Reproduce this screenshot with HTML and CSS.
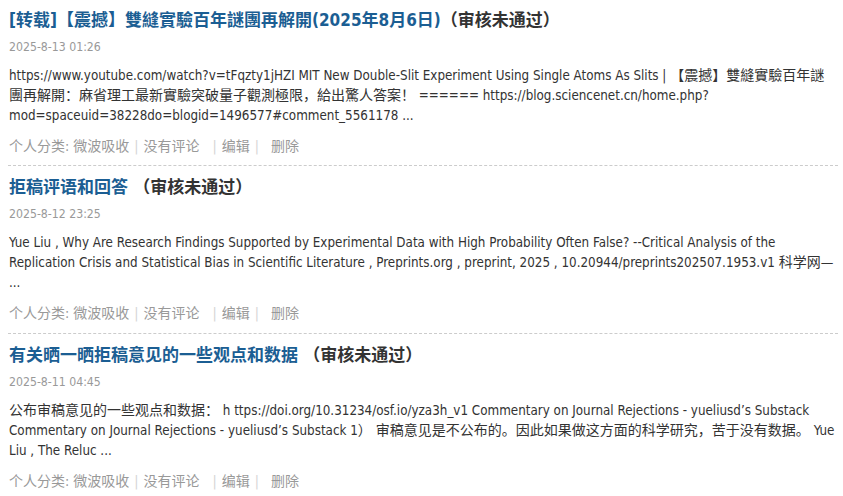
FILE: index.html
```html
<!DOCTYPE html>
<html lang="zh">
<head>
<meta charset="utf-8">
<link rel="stylesheet" href="styles.css">
</head>
<body>
<div class="list">
  <div class="entry first">
    <div class="title"><a href="#">[转载]【震撼】雙縫實驗百年謎團再解開(2025年8月6日)</a><span class="status">（审核未通过）</span></div>
    <div class="date">2025-8-13 01:26</div>
    <div class="body">https://www.youtube.com/watch?v=tFqzty1jHZI MIT New Double-Slit Experiment Using Single Atoms As Slits | <span class="zh">【震撼】雙縫實驗百年謎團再解開：麻省理工最新實驗突破量子觀測極限，給出驚人答案！</span> ====== https://blog.sciencenet.cn/home.php?mod=spaceuid=38228do=blogid=1496577#comment_5561178 ...</div>
    <div class="meta">个人分类: <a href="#">微波吸收</a><span class="sep">|</span><a href="#">没有评论</a>&nbsp; <span class="sep">|</span><a href="#">编辑</a><span class="sep last">|</span> <a href="#">删除</a></div>
  </div>
  <div class="entry">
    <div class="title"><a href="#">拒稿评语和回答</a> <span class="status">（审核未通过）</span></div>
    <div class="date">2025-8-12 23:25</div>
    <div class="body">Yue Liu , Why Are Research Findings Supported by Experimental Data with High Probability Often False? --Critical Analysis of the Replication Crisis and Statistical Bias in Scientific Literature , Preprints.org , preprint, 2025 , 10.20944/preprints202507.1953.v1 <span class="zh">科学网—</span><br>...</div>
    <div class="meta">个人分类: <a href="#">微波吸收</a><span class="sep">|</span><a href="#">没有评论</a>&nbsp; <span class="sep">|</span><a href="#">编辑</a><span class="sep last">|</span> <a href="#">删除</a></div>
  </div>
  <div class="entry">
    <div class="title"><a href="#">有关晒一晒拒稿意见的一些观点和数据</a> <span class="status">（审核未通过）</span></div>
    <div class="date">2025-8-11 04:45</div>
    <div class="body"><span class="zh">公布审稿意见的一些观点和数据：</span> h ttps://doi.org/10.31234/osf.io/yza3h_v1 Commentary on Journal Rejections - yueliusd’s Substack Commentary on Journal Rejections - yueliusd’s Substack 1<span class="zh">） 审稿意见是不公布的。因此如果做这方面的科学研究，苦于没有数据。</span> Yue Liu , The Reluc ...</div>
    <div class="meta">个人分类: <a href="#">微波吸收</a><span class="sep">|</span><a href="#">没有评论</a>&nbsp; <span class="sep">|</span><a href="#">编辑</a><span class="sep last">|</span> <a href="#">删除</a></div>
  </div>
</div>
</body>
</html>
```
FILE: styles.css
```css
html, body {
  margin: 0;
  padding: 0;
  background: #fff;
}
body {
  font-family: "DejaVu Sans Condensed", "DejaVu Sans", "Noto Sans CJK SC", sans-serif;
  font-stretch: condensed;
  font-size: 13.3px;
  color: #333;
}
a {
  text-decoration: none;
  color: inherit;
}
.list {
  margin: 0 5px 0 8px;
}
.entry {
  padding: 9px 0 10px 1px;
  border-bottom: 1px dashed #cccccc;
}
.entry.first {
  padding-top: 8px;
  padding-bottom: 9px;
}
.title {
  font-size: 17px;
  font-weight: bold;
  line-height: 24px;
  color: #1b5e93;
  white-space: nowrap;
}
.status {
  color: #333;
}
.date {
  margin-top: 6px;
  font-size: 12.2px;
  line-height: 18px;
  color: #999;
}
.body {
  margin-top: 10px;
  line-height: 20px;
  color: #333;
}
.zh {
  font-size: 14px;
  line-height: 18px;
}
.meta {
  margin-top: 10px;
  font-size: 14px;
  line-height: 20px;
  color: #999;
}
.sep {
  color: #d5d5d5;
  margin: 0 5px;
}
.sep.last {
  margin-right: 8px;
}
```
